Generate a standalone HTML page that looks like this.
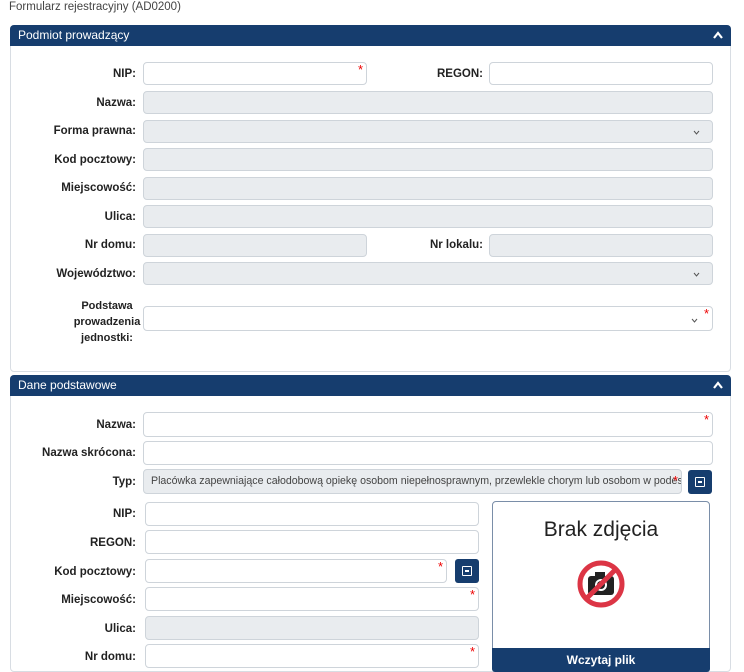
<!DOCTYPE html><html><head><style>
html,body{margin:0;width:744px;height:672px;overflow:hidden}
body{background:#fff;font-family:"Liberation Sans",sans-serif;font-size:12px;color:#222;position:relative}
.a{position:absolute}
.t{left:9px;top:1px;color:#444;font-size:11.5px}
.p{border:1px solid #d8dde3;border-radius:4px;left:10px;width:719px}
.h{left:10px;width:721px;height:21px;background:#163d6e;color:#fff;border-radius:4px 4px 0 0;font-size:12px;line-height:21px;text-indent:8px}
.h svg{position:absolute;right:8px;top:6px}
.l{font-weight:bold;text-align:right;width:130px;font-size:11.5px}
.i{border:1px solid #ced4da;border-radius:4px;height:23px;background:#fff;box-sizing:border-box}
.g{background:#e9ecef}
.s:after{content:"*";color:#e00;position:absolute;right:3px;top:-1px;font-size:13px}
.c svg{position:absolute;right:12px;top:9px}
.b{background:#163d6e;border-radius:3px;width:24px;height:24px}
.b:after{content:"";position:absolute;left:7px;top:7px;width:8px;height:8px;border:1px solid #fff;border-radius:1px;background:linear-gradient(#fff,#fff) 2px 3px/4px 2px no-repeat}
</style></head><body>
<div class="a t">Formularz rejestracyjny (AD0200)</div>
<div class="a p" style="top:25px;height:345px"></div>
<div class="a h" style="top:25px">Podmiot prowadzący<svg width="10" height="8"><path d="M1 7L5 2L9 7" stroke="#fff" stroke-width="2.2" fill="none"/></svg></div>
<div class="a l" style="left:6px;top:68px">NIP:</div><div class="a i s" style="left:143px;top:62px;width:224px"></div>
<div class="a l" style="left:353px;top:68px">REGON:</div><div class="a i" style="left:489px;top:62px;width:224px"></div>
<div class="a l" style="left:6px;top:97px">Nazwa:</div><div class="a i g" style="left:143px;top:91px;width:570px"></div>
<div class="a l" style="left:6px;top:125px">Forma prawna:</div><div class="a i g c" style="left:143px;top:120px;width:570px"><svg width="7" height="5"><path d="M1 1L3.5 4L6 1" stroke="#555" fill="none"/></svg></div>
<div class="a l" style="left:6px;top:154px">Kod pocztowy:</div><div class="a i g" style="left:143px;top:148px;width:570px"></div>
<div class="a l" style="left:6px;top:182px">Miejscowość:</div><div class="a i g" style="left:143px;top:177px;width:570px"></div>
<div class="a l" style="left:6px;top:211px">Ulica:</div><div class="a i g" style="left:143px;top:205px;width:570px"></div>
<div class="a l" style="left:6px;top:239px">Nr domu:</div><div class="a i g" style="left:143px;top:234px;width:224px"></div>
<div class="a l" style="left:353px;top:239px">Nr lokalu:</div><div class="a i g" style="left:489px;top:234px;width:224px"></div>
<div class="a l" style="left:6px;top:268px">Województwo:</div><div class="a i g c" style="left:143px;top:262px;width:570px"><svg width="7" height="5"><path d="M1 1L3.5 4L6 1" stroke="#555" fill="none"/></svg></div>
<div class="a l" style="left:70px;top:298px;text-align:center;width:74px;line-height:16px;font-size:11px">Podstawa prowadzenia jednostki:</div><div class="a i s c" style="left:143px;top:306px;width:570px;height:25px"><svg width="7" height="5" style="right:14px;top:11px"><path d="M1 1L3.5 4L6 1" stroke="#555" fill="none"/></svg></div>
<div class="a p" style="top:375px;height:295px"></div>
<div class="a h" style="top:375px">Dane podstawowe<svg width="10" height="8"><path d="M1 7L5 2L9 7" stroke="#fff" stroke-width="2.2" fill="none"/></svg></div>
<div class="a l" style="left:6px;top:419px">Nazwa:</div><div class="a i s" style="left:143px;top:412px;width:570px;height:25px"></div>
<div class="a l" style="left:6px;top:447px">Nazwa skrócona:</div><div class="a i" style="left:143px;top:441px;width:570px;height:24px"></div>
<div class="a l" style="left:6px;top:476px">Typ:</div><div class="a i g s" style="left:143px;top:469px;width:539px;height:25px;color:#444;font-size:10.6px;line-height:23px;padding-left:7px;white-space:nowrap;overflow:hidden">Placówka zapewniające całodobową opiekę osobom niepełnosprawnym, przewlekle chorym lub osobom w podes</div>
<div class="a b" style="left:688px;top:470px"></div>
<div class="a l" style="left:6px;top:508px">NIP:</div><div class="a i" style="left:145px;top:502px;width:334px;height:24px"></div>
<div class="a l" style="left:6px;top:537px">REGON:</div><div class="a i" style="left:145px;top:530px;width:334px;height:24px"></div>
<div class="a l" style="left:6px;top:566px">Kod pocztowy:</div><div class="a i s" style="left:145px;top:559px;width:302px;height:24px"></div>
<div class="a b" style="left:455px;top:559px"></div>
<div class="a l" style="left:6px;top:594px">Miejscowość:</div><div class="a i s" style="left:145px;top:587px;width:334px;height:24px"></div>
<div class="a l" style="left:6px;top:623px">Ulica:</div><div class="a i g" style="left:145px;top:616px;width:334px;height:24px"></div>
<div class="a l" style="left:6px;top:651px">Nr domu:</div><div class="a i s" style="left:145px;top:644px;width:334px;height:24px"></div>
<div class="a" style="left:492px;top:501px;width:216px;height:146px;border:1px solid #7a8ea8;border-radius:4px 4px 0 0;text-align:center">
<div style="font-size:21px;margin-top:16px;color:#222">Brak zdjęcia</div>
<svg width="52" height="52" viewBox="0 0 52 52" style="margin-top:16px"><rect x="13" y="18" width="26" height="19" rx="3" fill="#222"/><rect x="20" y="14" width="10" height="6" fill="#222"/><circle cx="26" cy="27" r="6" fill="#fff"/><circle cx="26" cy="27" r="4" fill="#222"/><circle cx="26" cy="26" r="21" fill="none" stroke="#dc3545" stroke-width="5"/><path d="M11 41L41 11" stroke="#dc3545" stroke-width="5"/></svg></div>
<div class="a" style="left:492px;top:648px;width:218px;height:24px;background:#163d6e;color:#fff;font-weight:bold;text-align:center;line-height:24px;border-radius:0 0 3px 3px">Wczytaj plik</div>
</body></html>
